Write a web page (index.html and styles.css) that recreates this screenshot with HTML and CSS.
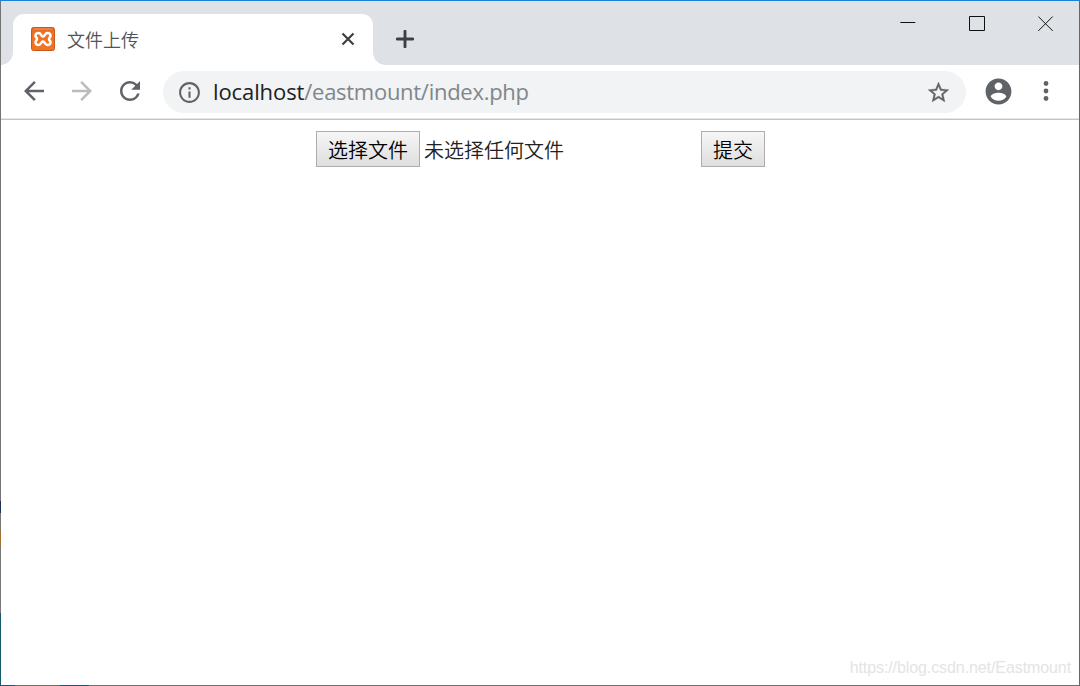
FILE: index.html
```html
<!DOCTYPE html>
<html lang="zh-CN">
<head>
<meta charset="utf-8">
<title>文件上传</title>
<link rel="stylesheet" href="styles.css">
</head>
<body>
<div class="window">
  <header class="titlebar">
    <div class="tab">
      <svg class="favicon" viewBox="0 0 24 24">
        <defs><linearGradient id="fav" x1="0" y1="0" x2="0" y2="1"><stop offset="0" stop-color="#d9641c"/><stop offset=".2" stop-color="#ee7224"/><stop offset="1" stop-color="#f2741f"/></linearGradient></defs>
        <rect x=".5" y=".5" width="23" height="23" rx="2" fill="url(#fav)" stroke="#c55a1a"/>
        <path d="M2.500 2h19" stroke="#f09a66" stroke-width="1"/>
        <path d="M7.500 6C5.300 6 4.300 7.500 4.500 9C4.700 10.400 6 10.600 6 12C6 13.400 4.700 13.600 4.500 15C4.300 16.800 5.500 18 7.500 18C10.300 18 9.800 14.600 12 14.600C14.200 14.600 13.700 18 16.500 18C18.500 18 19.700 16.800 19.500 15C19.300 13.600 18 13.400 18 12C18 10.600 19.300 10.400 19.500 9C19.700 7.500 18.700 6 16.500 6C13.700 6 14.200 9.400 12 9.400C9.800 9.400 10.300 6 7.500 6Z" fill="none" stroke="#fff" stroke-width="2.500"/>
      </svg>
      <span class="tab-title">文件上传</span>
      <svg class="tab-close" viewBox="0 0 14 14"><path d="M1.500 1.500l11 11M12.500 1.500l-11 11"/></svg>
    </div>
    <svg class="new-tab" viewBox="0 0 18 18"><path d="M9 1.200v15.600M1.200 9h15.600"/></svg>
    <div class="controls">
      <svg viewBox="0 0 16 16"><path d="M.3 6.500h15"/></svg>
      <svg viewBox="0 0 16 16"><path d="M.5 .5h15v14h-15z"/></svg>
      <svg viewBox="0 0 16 16"><path d="M.3 .5l14.400 14.400M14.700 .5L.3 14.900"/></svg>
    </div>
  </header>
  <nav class="toolbar">
    <svg class="nav-icon" viewBox="0 0 24 24"><path d="M20 11H7.830l5.590-5.590L12 4l-8 8 8 8 1.410-1.410L7.830 13H20v-2z"/></svg>
    <svg class="nav-icon disabled" viewBox="0 0 24 24"><path d="M12 4l-1.410 1.410L16.170 11H4v2h12.170l-5.580 5.590L12 20l8-8z"/></svg>
    <svg class="nav-icon" viewBox="0 0 24 24"><path d="M17.650 6.350A7.960 7.960 0 0 0 12 4c-4.420 0-7.990 3.580-7.990 8s3.570 8 7.990 8c3.730 0 6.840-2.550 7.730-6h-2.080A5.990 5.990 0 0 1 12 18c-3.310 0-6-2.690-6-6s2.690-6 6-6c1.660 0 3.140.69 4.220 1.780L13 11h7V4l-2.350 2.350z"/></svg>
    <div class="omnibox">
      <svg class="box-icon" viewBox="0 0 24 24"><path d="M11 17h2v-6h-2v6zm1-15C6.480 2 2 6.480 2 12s4.480 10 10 10 10-4.480 10-10S17.520 2 12 2zm0 18c-4.410 0-8-3.590-8-8s3.590-8 8-8 8 3.590 8 8-3.590 8-8 8zM11 9h2V7h-2v2z"/></svg>
      <span class="url"><span class="host">localhost</span>/eastmount/index.php</span>
      <svg class="box-icon star" viewBox="0 0 24 24"><path d="M22 9.240l-7.190-.62L12 2 9.190 8.630 2 9.240l5.460 4.730L5.820 21 12 17.270 18.180 21l-1.630-7.030L22 9.240zM12 15.400l-3.760 2.270 1-4.280-3.320-2.880 4.380-.38L12 6.100l1.710 4.040 4.380.38-3.320 2.880 1 4.280L12 15.400z"/></svg>
    </div>
    <svg class="avatar" viewBox="0 0 24 24"><path d="M12 2C6.480 2 2 6.480 2 12s4.480 10 10 10 10-4.480 10-10S17.520 2 12 2zm0 3c1.660 0 3 1.340 3 3s-1.340 3-3 3-3-1.340-3-3 1.340-3 3-3zm0 14.200c-2.500 0-4.710-1.280-6-3.220.03-1.990 4-3.080 6-3.080 1.990 0 5.970 1.090 6 3.080-1.290 1.940-3.500 3.220-6 3.220z"/></svg>
    <svg class="menu" viewBox="0 0 6 20"><circle cx="3" cy="2.500" r="2.400"/><circle cx="3" cy="10" r="2.400"/><circle cx="3" cy="17.500" r="2.400"/></svg>
  </nav>
  <main class="page">
    <form class="upload">
      <button class="btn choose" type="button">选择文件</button>
      <span class="status">未选择任何文件</span>
      <button class="btn submit" type="button">提交</button>
    </form>
    <div class="watermark">https://blog.csdn.net/Eastmount</div>
  </main>
</div>
</body>
</html>
```
FILE: styles.css
```css
* { box-sizing: border-box; }
body {
  margin: 0;
  height: 686px;
  padding: 1px;
  overflow: hidden;
  background:
    linear-gradient(#1883d7, #1883d7) 0 0 / 100% 1px no-repeat,
    linear-gradient(90deg, #17586c 0 15px, #706d5e 15px 60px, #17586c 60px 89px, #707070 89px) 0 100% / 100% 1px no-repeat,
    linear-gradient(#747474 0 501px, #20305c 501px 513px, #777 513px 532px, #a5702f 532px 546px, #777 546px 613px, #17586c 613px) 0 0 / 1px 100% no-repeat,
    #666;
  font-family: "Noto Sans CJK SC", sans-serif;
}
svg { display: block; flex: none; }
.window {
  height: 684px;
  display: flex;
  flex-direction: column;
  background: #fff;
}
.titlebar {
  height: 64px;
  display: flex;
  align-items: flex-end;
  background: #dee1e6;
}
.tab {
  position: relative;
  width: 360px;
  height: 51px;
  margin-left: 12px;
  padding: 0 18px 2px;
  display: flex;
  align-items: center;
  background: #fff;
  border-radius: 11px 11px 0 0;
}
.tab::before,
.tab::after {
  content: "";
  position: absolute;
  bottom: 0;
  width: 12px;
  height: 12px;
}
.tab::before { left: -12px; background: radial-gradient(circle at 0 0, transparent 11.500px, #fff 12px); }
.tab::after { right: -12px; background: radial-gradient(circle at 100% 0, transparent 11.500px, #fff 12px); }
.favicon { width: 24px; height: 24px; }
.tab-title {
  flex: 1;
  margin-left: 12px;
  font-size: 18px;
  font-weight: 350;
  line-height: 24px;
  color: #505357;
}
.tab-close { width: 14px; height: 14px; fill: none; stroke: #3c4043; stroke-width: 2.200; }
.new-tab {
  width: 18px;
  height: 18px;
  margin: 0 0 17px 23px;
  fill: none;
  stroke: #3c4043;
  stroke-width: 2.900;
  stroke-linecap: round;
}
.controls {
  display: flex;
  gap: 53px;
  margin: 0 25px 33px auto;
}
.controls svg { width: 16px; height: 16px; fill: none; stroke: #111; stroke-width: 1; }
.toolbar {
  height: 55px;
  padding: 0 30px 2px 18px;
  display: flex;
  align-items: center;
  border-bottom: 1px solid #c4c4c4;
  box-shadow: inset 0 -1px #e6e6e6;
  fill: #5f6368;
}
.nav-icon { width: 30px; height: 30px; margin-right: 18px; }
.disabled { fill: #babcbe; }
.omnibox {
  width: 803px;
  height: 42px;
  margin-top: 2px;
  padding: 0 14px;
  display: flex;
  align-items: center;
  border-radius: 21px;
  background: #f1f3f4;
}
.box-icon { width: 25px; height: 25px; }
.star { margin-right: 1px; stroke: #5f6368; stroke-width: .3; }
.url {
  flex: 1;
  margin-left: 11px;
  padding-bottom: 2px;
  font-family: "Open Sans", "Noto Sans", sans-serif;
  font-size: 22px;
  line-height: 30px;
  letter-spacing: -.28px;
  color: #80868b;
}
.host { letter-spacing: -.1px; color: #202124; }
.avatar { width: 31px; height: 31px; margin-left: 17px; }
.menu { width: 6px; height: 20px; margin-left: auto; }
.page {
  flex: 1;
  display: flex;
  flex-direction: column;
  justify-content: space-between;
}
.upload {
  display: flex;
  align-items: center;
  margin: 11px 0 0 315px;
  font-size: 20px;
}
.btn {
  height: 36px;
  padding: 1px 0 0;
  border: 1px solid #adadad;
  background: linear-gradient(#f6f6f6, #dedede);
  font: 20px/33px "Noto Sans CJK SC", sans-serif;
  color: #000;
}
.choose { width: 104px; }
.submit { width: 64px; }
.status { width: 277px; margin-left: 4px; padding-top: 2px; line-height: 34px; color: #222; }
.btn, .status { font-weight: 350; white-space: nowrap; }
.watermark {
  align-self: flex-end;
  margin: 0 8px 7px 0;
  font: 16px/20px "Liberation Sans", Arial, sans-serif;
  letter-spacing: -.09px;
  color: #e4e4e4;
}
```
